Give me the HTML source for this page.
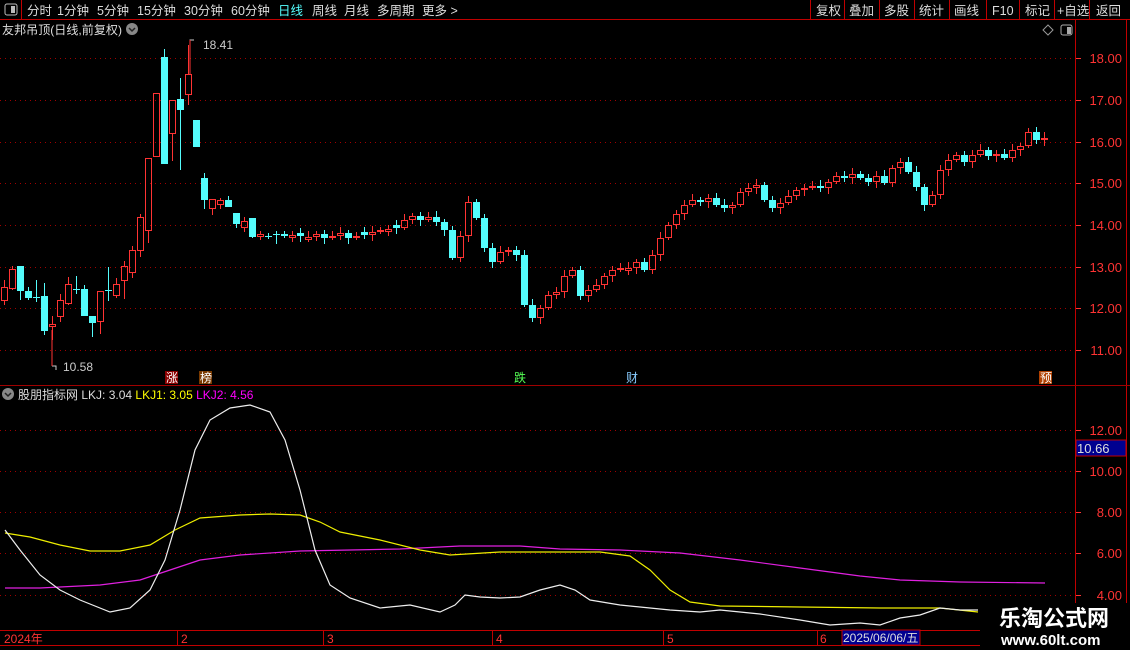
<!DOCTYPE html>
<html><head><meta charset="utf-8"><style>
body{margin:0;background:#000;width:1130px;height:650px;overflow:hidden;font-family:"Liberation Sans","Noto Sans CJK SC",sans-serif}
svg{position:absolute;left:0;top:0}
text{font-family:"Liberation Sans","Noto Sans CJK SC",sans-serif}
</style></head><body>
<svg id="s" width="1130" height="650" xmlns="http://www.w3.org/2000/svg">
<rect width="1130" height="650" fill="#000"/>
<line x1="0" y1="19.5" x2="1130" y2="19.5" stroke="#c00000"/>
<line x1="21.5" y1="0" x2="21.5" y2="19" stroke="#c00000"/>
<rect x="5" y="4" width="12" height="11" rx="2" fill="none" stroke="#bbb"/><rect x="11" y="6" width="4" height="7" fill="#bbb"/>
<g font-size="12.5" fill="#ddd">
<text x="27" y="15">分时</text><text x="57" y="15">1分钟</text><text x="97" y="15">5分钟</text><text x="137" y="15">15分钟</text><text x="184" y="15">30分钟</text><text x="231" y="15">60分钟</text>
<text x="278" y="15" fill="#5ff">日线</text><text x="312" y="15">周线</text><text x="344" y="15">月线</text><text x="377" y="15">多周期</text><text x="422" y="15">更多 &gt;</text>
<text x="816" y="15">复权</text><text x="849" y="15">叠加</text><text x="884" y="15">多股</text><text x="919" y="15">统计</text><text x="954" y="15">画线</text><text x="992" y="15">F10</text><text x="1025" y="15">标记</text><text x="1057" y="15">+自选</text><text x="1096" y="15">返回</text>
</g>
<g stroke="#c00000"><line x1="810.5" y1="0" x2="810.5" y2="19"/><line x1="844.5" y1="0" x2="844.5" y2="19"/><line x1="879.5" y1="0" x2="879.5" y2="19"/><line x1="914.5" y1="0" x2="914.5" y2="19"/><line x1="949.5" y1="0" x2="949.5" y2="19"/><line x1="986.5" y1="0" x2="986.5" y2="19"/><line x1="1019.5" y1="0" x2="1019.5" y2="19"/><line x1="1054.5" y1="0" x2="1054.5" y2="19"/><line x1="1089.5" y1="0" x2="1089.5" y2="19"/></g>
<text x="2" y="34" font-size="12" fill="#ddd" textLength="120" lengthAdjust="spacingAndGlyphs">友邦吊顶(日线,前复权)</text>
<circle cx="132" cy="29" r="6" fill="#888"/><path d="M129 28l3 3 3-3" stroke="#222" fill="none" stroke-width="1.5"/>
<path d="M1048 25l5 5-5 5-5-5z" fill="none" stroke="#999"/>
<rect x="1061" y="25" width="11" height="10" rx="2" fill="none" stroke="#aaa"/><rect x="1067" y="27" width="4" height="7" fill="#aaa"/>
<line x1="1075.5" y1="20" x2="1075.5" y2="645" stroke="#c00000"/>
<line x1="1126.5" y1="20" x2="1126.5" y2="645" stroke="#c00000"/>
<line x1="0" y1="385.5" x2="1130" y2="385.5" stroke="#a00000"/>
<line x1="0" y1="630.5" x2="980" y2="630.5" stroke="#c00000"/>
<line x1="0" y1="645.5" x2="980" y2="645.5" stroke="#c00000"/>
<g id="grid" stroke="#a00000" stroke-dasharray="1 4"></g>
<g font-size="13" fill="#ff3333" id="ax"></g>
<rect x="1076" y="440" width="50" height="16" fill="#000090" stroke="#c00000"/>
<text x="1077" y="453" font-size="13" fill="#ddd">10.66</text>
<g id="c"></g>
<path d="M190 44v-4h4" stroke="#ccc" fill="none"/><text x="203" y="49" font-size="12" fill="#ccc">18.41</text>
<path d="M52 366h4v4" stroke="#ccc" fill="none"/><text x="63" y="371" font-size="12" fill="#ccc">10.58</text>
<line x1="52" y1="330" x2="52" y2="366" stroke="#ff3333"/>
<line x1="190" y1="40" x2="190" y2="74" stroke="#ff3333"/>
<rect x="165" y="371" width="13" height="13" fill="#8a0000"/><text x="166" y="382" font-size="12" fill="#fff">涨</text>
<rect x="199" y="371" width="13" height="13" fill="#7a3a00"/><text x="200" y="382" font-size="12" fill="#fff">榜</text>
<text x="514" y="382" font-size="12" fill="#5f5">跌</text>
<text x="626" y="382" font-size="12" fill="#8cf">财</text>
<rect x="1039" y="371" width="13" height="13" fill="#b04000"/><text x="1040" y="382" font-size="12" fill="#fff">预</text>
<circle cx="8" cy="394" r="6" fill="#888"/><path d="M5 393l3 3 3-3" stroke="#222" fill="none" stroke-width="1.5"/>
<text x="18" y="399" font-size="12" fill="#ddd">股朋指标网 <tspan>LKJ: 3.04</tspan> <tspan fill="#ff0">LKJ1: 3.05</tspan> <tspan fill="#f0f">LKJ2: 4.56</tspan></text>
<polyline fill="none" stroke="#e020e0" stroke-width="1.2" points="5,588 40,588 100,585 140,580 170,570 200,560 240,555 300,551 350,550 400,549 460,546 520,546 560,549 620,550 680,553 740,560 800,568 860,576 900,580 960,582 1045,583"/>
<polyline fill="none" stroke="#ee0" stroke-width="1.2" points="5,533 30,537 60,545 90,551 120,551 150,545 175,530 200,518 240,515 270,514 300,515 320,522 340,532 380,540 420,550 450,555 500,552 560,552 600,552 630,556 650,570 670,590 690,602 720,606 800,607 880,608 940,608 978,612"/>
<polyline fill="none" stroke="#eee" stroke-width="1.2" points="5,530 20,550 40,575 60,590 80,600 110,612 130,608 150,590 165,560 180,510 195,450 210,420 230,408 250,405 270,412 285,440 300,490 315,550 330,585 350,598 380,608 410,605 440,612 455,605 465,595 480,597 500,598 520,597 540,590 560,585 575,590 590,600 620,605 650,608 670,610 700,612 720,610 760,614 800,620 830,625 860,623 880,625 900,618 920,615 940,608 960,610 978,610"/>
<g font-size="12" fill="#ff3333">
<text x="4" y="643">2024年</text><text x="181" y="643">2</text><text x="327" y="643">3</text><text x="496" y="643">4</text><text x="667" y="643">5</text><text x="820" y="643">6</text></g>
<g stroke="#c00000"><line x1="177.5" y1="630" x2="177.5" y2="645"/><line x1="323.5" y1="630" x2="323.5" y2="645"/><line x1="492.5" y1="630" x2="492.5" y2="645"/><line x1="663.5" y1="630" x2="663.5" y2="645"/><line x1="817.5" y1="630" x2="817.5" y2="645"/></g>
<rect x="842" y="630" width="78" height="15" fill="#000090" stroke="#c00000"/>
<text x="843" y="642" font-size="12" fill="#ddd">2025/06/06/五</text>
<rect x="980" y="603" width="150" height="47" fill="#000"/>
<text x="999" y="626" font-size="22" font-weight="bold" fill="#fff" font-family="Noto Sans CJK SC">乐淘公式网</text>
<text x="1001" y="645" font-size="15" font-weight="bold" fill="#fff" font-family="Liberation Serif,serif">www.60lt.com</text>
</svg>
<script>
var NS="http://www.w3.org/2000/svg";
function el(p,t,a,txt){var e=document.createElementNS(NS,t);for(var k in a)e.setAttribute(k,a[k]);if(txt)e.textContent=txt;document.getElementById(p).appendChild(e);}
[58,100,142,183,225,267,308,350,430,471,512,553,595].forEach(function(y){el("grid","line",{x1:0,y1:y+.5,x2:1075,y2:y+.5});});
var lab=[[58,"18.00"],[100,"17.00"],[142,"16.00"],[183,"15.00"],[225,"14.00"],[267,"13.00"],[308,"12.00"],[350,"11.00"],[430,"12.00"],[471,"10.00"],[512,"8.00"],[553,"6.00"],[595,"4.00"]];
lab.forEach(function(l){el("ax","text",{x:1122,y:l[0]+5,"text-anchor":"end"},l[1]);el("ax","line",{x1:1076,y1:l[0]+.5,x2:1081,y2:l[0]+.5,stroke:"#ff3333"});});
var C=[[301,287,280,305],[289,269,266,290],[266,291,266,300],[291,298,287,300],[297,297,280,302],[296,331,283,335],[327,324,316,340],[317,300,294,322],[304,284,277,305],[289,289,276,294],[289,316,285,316],[316,323,316,337],[322,291,291,334],[290,290,267,301],[296,284,278,298],[281,266,261,299],[273,250,246,278],[251,217,214,257],[231,158,158,243],[157,93,93,157],[57,164,49,164],[134,100,100,161],[99,110,78,170],[95,74,45,105],[120,147,120,147],[178,200,173,209],[209,199,199,215],[205,200,198,209],[200,207,196,207],[213,224,213,228],[228,221,217,232],[218,237,218,238],[237,234,231,240],[236,236,233,239],[234,234,231,244]];
var closes=[236,235,236,237,234,238,236,233,238,236,235,232,230,229,228,220,216,220,217,222,230,258,236,202,218,248,262,252,250,255,305,318,308,295,292,276,270,296,290,285,276,270,268,268,262,270,255,238,225,214,205,200,202,198,205,208,205,192,188,185,200,208,203,196,190,188,186,188,182,176,178,174,178,182,176,183,168,162,172,187,205,195,170,160,155,162,155,150,156,154,158,150,146,132,140,138];
var prev=234;
closes.forEach(function(c,i){var o=prev; if(Math.abs(o-c)<2){o=c+((i%2)?3:-3);} C.push([o,c,Math.min(o,c)-3-(i%4),Math.max(o,c)+2+(i%3)*2]);prev=c;});
C.forEach(function(k,i){var x=4+i*8;var up=k[1]<k[0];var col=up?"#ff3333":"#54fcfc";var t=Math.min(k[0],k[1]),b=Math.max(k[0],k[1]);if(b-t<1)b=t+1;
el("c","line",{x1:x+.5,y1:k[2],x2:x+.5,y2:t,stroke:col});el("c","line",{x1:x+.5,y1:b,x2:x+.5,y2:k[3],stroke:col});
if(up)el("c","rect",{x:x-2.5,y:t+.5,width:6,height:b-t-1,fill:"none",stroke:col});else el("c","rect",{x:x-3,y:t,width:7,height:b-t,fill:col});});
</script>
</body></html>
